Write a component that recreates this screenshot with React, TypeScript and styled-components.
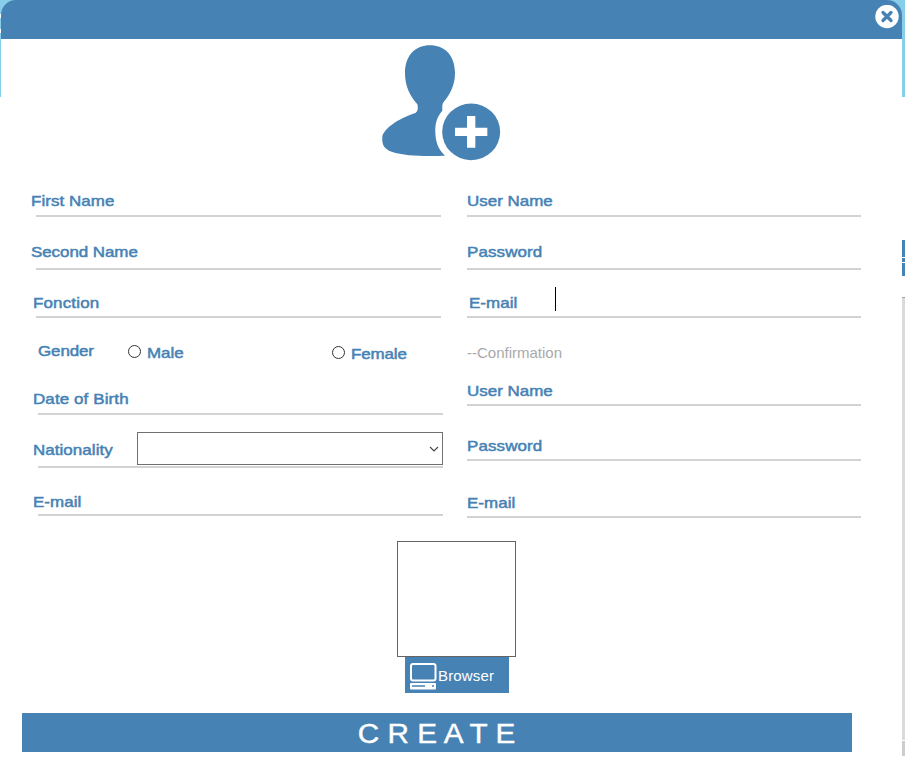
import React from "react";
import styled, { createGlobalStyle } from "styled-components";

const BLUE = "#4682b4";
const SKY = "#87ceeb";

const GlobalStyle = createGlobalStyle`
  * { box-sizing: border-box; }
  body { margin: 0; background: #fff; overflow: hidden; }
`;

const Page = styled.div`
  display: grid;
  grid-template-columns: 1px 901px 3px;
  width: 905px;
  height: 766px;
  overflow: hidden;
  background: #fff;
  font: 15px/20px "Liberation Sans", Arial, sans-serif;
`;

const Strip = styled.div`
  display: flex;
  flex-direction: column;
`;

const Segment = styled.div<{ $h: number; $c: string }>`
  flex: none;
  height: ${(p) => p.$h}px;
  background: ${(p) => p.$c};
`;

const Dialog = styled.main`
  display: flex;
  flex-direction: column;
`;

const HeaderBacking = styled.div`
  height: 39px;
  background: ${SKY};
`;

const Header = styled.header`
  display: flex;
  justify-content: flex-end;
  height: 39px;
  padding: 5px 3px 0 0;
  background: ${BLUE};
  border-radius: 15px 15px 0 0;
`;

const CloseButton = styled.button`
  width: 24px;
  height: 24px;
  padding: 0;
  border: 0;
  background: none;
  svg { display: block; }
`;

const Avatar = styled.div`
  height: 118px;
  margin: 4px 0 0 379px;
  svg { display: block; }
`;

const Columns = styled.div`
  display: grid;
  grid-template-columns: 412px 394px;
  column-gap: 24px;
  height: 357px;
  padding-left: 30px;
`;

const Column = styled.div`
  display: flex;
  flex-direction: column;
`;

const FieldBox = styled.div<{ $h: number }>`
  display: flex;
  flex-direction: column;
  justify-content: flex-end;
  height: ${(p) => p.$h}px;
`;

const FieldLine = styled.div<{ $indent: number }>`
  display: flex;
  align-items: flex-end;
  padding-left: ${(p) => p.$indent}px;
`;

const Label = styled.label<{ $gap?: number; $w?: number; $track?: number }>`
  flex: none;
  width: ${(p) => (p.$w ? `${p.$w}px` : "auto")};
  margin-bottom: ${(p) => p.$gap ?? 0}px;
  color: ${BLUE};
  letter-spacing: ${(p) => p.$track ?? 0.05}px;
  white-space: nowrap;
  -webkit-text-stroke: 0.5px ${BLUE};
  transform: scaleX(1.13);
  transform-origin: left;
`;

const Rule = styled.div<{ $left: number; $right: number }>`
  flex: none;
  height: 2px;
  margin: 0 ${(p) => p.$right}px 0 ${(p) => p.$left}px;
  background: #d3d3d3;
`;

const Caret = styled.span`
  width: 1px;
  height: 24px;
  margin-bottom: 5px;
  background: #000;
`;

const Combo = styled.div`
  display: flex;
  align-items: center;
  justify-content: flex-end;
  width: 306px;
  height: 33px;
  margin-bottom: 1px;
  padding-right: 3px;
  border: 1px solid #707070;
  background: #fff;
`;

const GenderRow = styled.div`
  display: flex;
  height: 48px;
  padding: 23px 0 0 7px;
`;

const Choice = styled.div<{ $w: number; $drop: number }>`
  display: flex;
  width: ${(p) => p.$w}px;
  padding-top: ${(p) => p.$drop}px;
  gap: 6px;
`;

const Radio = styled.span`
  width: 13px;
  height: 13px;
  margin-top: 2px;
  border: 1px solid #333;
  border-radius: 50%;
`;

const Confirmation = styled.div`
  height: 32px;
  margin-top: 25px;
  color: #a9a9a9;
`;

const Preview = styled.div`
  width: 119px;
  height: 116px;
  margin: 23px 0 0 396px;
  border: 1px solid #646464;
`;

const BrowseButton = styled.button`
  display: flex;
  align-items: center;
  gap: 1px;
  width: 104px;
  height: 36px;
  margin-left: 404px;
  padding: 2px 0 0 5px;
  border: 0;
  background: ${BLUE};
  color: #fff;
  font: inherit;
  letter-spacing: 0.15px;
`;

const CreateButton = styled.button`
  width: 830px;
  height: 39px;
  margin: 20px 0 0 21px;
  padding: 2px 0 0;
  border: 0;
  background: ${BLUE};
  color: #fff;
  font: 27px/36px "Liberation Sans", Arial, sans-serif;
`;

const CreateText = styled.span`
  display: inline-block;
  transform: scaleX(1.1);
  -webkit-text-stroke: 0.4px #fff;
`;

type FieldProps = {
  label: string;
  h: number;
  gap: number;
  indent?: number;
  left?: number;
  right?: number;
  labelWidth?: number;
  track?: number;
  children?: React.ReactNode;
};

function Field({ label, h, gap, indent = 0, left = 0, right = 0, labelWidth, track, children }: FieldProps) {
  return (
    <FieldBox $h={h}>
      <FieldLine $indent={indent}>
        <Label $gap={gap} $w={labelWidth} $track={track}>{label}</Label>
        {children}
      </FieldLine>
      <Rule $left={left} $right={right} />
    </FieldBox>
  );
}

const UserPlusIcon = () => (
  <svg width="122" height="118" viewBox="30 21 366 354">
    <path
      fill={BLUE}
      d="M180 28C222 28 255 56 255 112C255 148 239 178 221 198C216 204 217 211 217 224C199 244 195 266 196 290C197 319 205 340 225 359C170 361 105 361 65 347C42 339 35 325 37 302C42 278 85 248 134 232C144 228 145 216 142 205C119 180 105 148 105 112C105 56 138 28 180 28Z"
    />
    <ellipse cx="303.5" cy="287.5" rx="87" ry="85" fill={BLUE} />
    <path fill="#fff" d="M291 240h25v35h36v25h-36v35h-25v-35h-36v-25h36z" />
  </svg>
);

const CloseIcon = () => (
  <svg width="24" height="24" viewBox="0 0 24 24">
    <circle cx="12" cy="11.5" r="11.7" fill="#fff" />
    <path d="M8 7.5l8 8M16 7.5l-8 8" stroke={BLUE} strokeWidth="3.3" strokeLinecap="round" />
  </svg>
);

const ComputerIcon = () => (
  <svg width="27" height="27" viewBox="0 0 27 27">
    <rect x="1" y="1" width="24.5" height="16.5" rx="2" fill="none" stroke="#fff" strokeWidth="2" />
    <rect x="0" y="20" width="26" height="6.5" rx="1" fill="#fff" />
    <path d="M2 23h13M22 23h2" stroke={BLUE} strokeWidth="1.5" />
  </svg>
);

const ChevronIcon = () => (
  <svg width="10" height="6" viewBox="0 0 10 6">
    <path d="M1 1l4 4 4-4" fill="none" stroke="#444" strokeWidth="1.1" />
  </svg>
);

export default function App() {
  return (
    <>
      <GlobalStyle />
      <Page>
        <Strip>
          <Segment $h={14} $c={SKY} />
          <Segment $h={4} $c="#fff" />
          <Segment $h={11} $c={SKY} />
          <Segment $h={4} $c="#fff" />
          <Segment $h={64} $c={SKY} />
        </Strip>
        <Dialog>
          <HeaderBacking>
            <Header>
              <CloseButton aria-label="Close"><CloseIcon /></CloseButton>
            </Header>
          </HeaderBacking>
          <Avatar><UserPlusIcon /></Avatar>
          <Columns>
            <Column>
              <Field label="First Name" h={56} gap={4} left={5} right={2} />
              <Field label="Second Name" h={53} gap={6} left={5} right={2} track={-0.05} />
              <Field label="Fonction" h={48} gap={3} indent={2} left={5} right={2} track={0.15} />
              <GenderRow>
                <Choice $w={90} $drop={0}><Label $track={-0.1}>Gender</Label></Choice>
                <Choice $w={204} $drop={2}><Radio /><Label $track={0}>Male</Label></Choice>
                <Choice $w={100} $drop={3}><Radio /><Label $track={-0.1}>Female</Label></Choice>
              </GenderRow>
              <Field label="Date of Birth" h={49} gap={4} indent={2} left={7} track={0.1} />
              <Field label="Nationality" h={53} gap={6} indent={2} left={7} labelWidth={104}>
                <Combo><ChevronIcon /></Combo>
              </Field>
              <Field label="E-mail" h={48} gap={2} indent={2} left={7} />
            </Column>
            <Column>
              <Field label="User Name" h={56} gap={4} track={0} />
              <Field label="Password" h={53} gap={6} track={0.1} />
              <Field label="E-mail" h={48} gap={3} indent={2} labelWidth={86}>
                <Caret />
              </Field>
              <Confirmation>--Confirmation</Confirmation>
              <Field label="User Name" h={31} gap={3} track={0} />
              <Field label="Password" h={55} gap={3} track={0.1} />
              <Field label="E-mail" h={57} gap={3} />
            </Column>
          </Columns>
          <Preview />
          <BrowseButton><ComputerIcon />Browser</BrowseButton>
          <CreateButton><CreateText>C R E A T E</CreateText></CreateButton>
        </Dialog>
        <Strip>
          <Segment $h={97} $c={SKY} />
          <Segment $h={143} $c="#fff" />
          <Segment $h={17} $c={BLUE} />
          <Segment $h={1} $c="#fff" />
          <Segment $h={4} $c={BLUE} />
          <Segment $h={1} $c="#fff" />
          <Segment $h={13} $c={BLUE} />
          <Segment $h={21} $c="#fff" />
          <Segment $h={1} $c="#a0a0a0" />
          <Segment $h={442} $c="#dadada" />
          <Segment $h={1} $c="#fff" />
          <Segment $h={15} $c="#cdcdcd" />
        </Strip>
      </Page>
    </>
  );
}
